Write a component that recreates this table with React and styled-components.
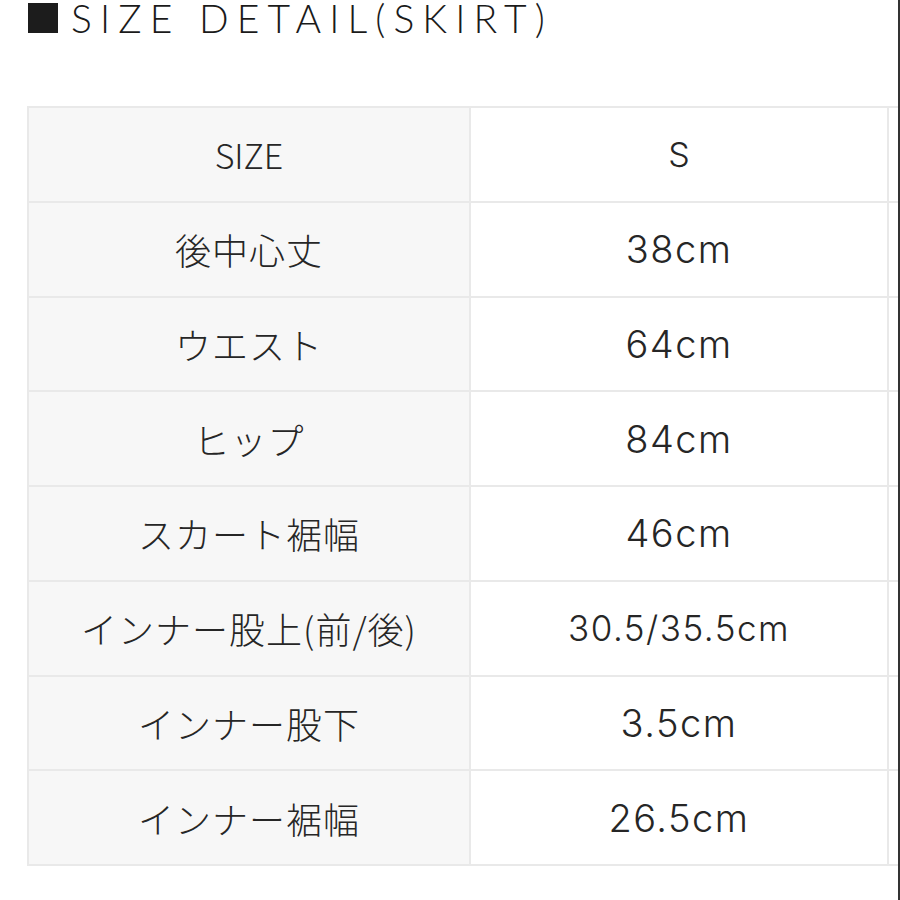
import React from "react";
import styled, { createGlobalStyle } from "styled-components";

const GlobalStyle = createGlobalStyle`
  html, body {
    margin: 0;
    padding: 0;
    background: #ffffff;
  }
`;

const Frame = styled.div`
  width: 900px;
  height: 900px;
  box-sizing: border-box;
  border-right: 2px solid #333333;
  overflow: hidden;
  background: #ffffff;
`;

const Title = styled.h2`
  display: flex;
  align-items: flex-start;
  gap: 13px;
  margin: 0;
  padding: 0 0 0 28px;
  font-family: "Lato", "Liberation Sans", sans-serif;
  font-weight: 300;
  font-size: 39px;
  line-height: 36px;
  letter-spacing: 8.1px;
  color: #1a1a1a;
  white-space: nowrap;
`;

const Mark = styled.span`
  display: block;
  width: 30px;
  height: 30px;
  margin-top: 3px;
  background: #1c1c1c;
  flex: none;
`;

const Table = styled.div`
  display: grid;
  grid-template-columns: 440px 416px 60px;
  grid-auto-rows: 92.75px;
  gap: 2px;
  padding: 2px;
  margin: 70px 0 0 27px;
  width: max-content;
  background: #e9e9e9;
`;

const Cell = styled.div`
  display: flex;
  align-items: center;
  justify-content: center;
  background: ${(p) => (p.$label ? "#f7f7f7" : "#ffffff")};
  color: #262626;
  font-family: ${(p) =>
    p.$label
      ? '"Noto Sans CJK JP", "Noto Sans", sans-serif'
      : '"Inter", "Liberation Sans", sans-serif'};
  font-size: ${(p) => p.$size || 36}px;
  font-weight: 300;
  letter-spacing: ${(p) => p.$spacing || 0}px;
  white-space: nowrap;
`;

const rows = [
  ["SIZE", "S"],
  ["後中心丈", "38cm"],
  ["ウエスト", "64cm"],
  ["ヒップ", "84cm"],
  ["スカート裾幅", "46cm"],
  ["インナー股上(前/後)", "30.5/35.5cm"],
  ["インナー股下", "3.5cm"],
  ["インナー裾幅", "26.5cm"],
];

const App = () => (
  <>
    <GlobalStyle />
    <Frame>
      <Title>
        <Mark />
        SIZE DETAIL(SKIRT)
      </Title>
      <Table>
        {rows.map(([label, value], i) => {
          const head = i === 0;
          const long = value.length > 8;
          return (
            <React.Fragment key={`row-${i}`}>
              <Cell $label $size={head ? 34 : 36} $spacing={head ? 0 : 1}>
                {label}
              </Cell>
              <Cell
                $size={head ? 34 : long ? 35 : 38}
                $spacing={head ? 0 : 1.5}
              >
                {value}
              </Cell>
              <Cell />
            </React.Fragment>
          );
        })}
      </Table>
    </Frame>
  </>
);

export default App;
